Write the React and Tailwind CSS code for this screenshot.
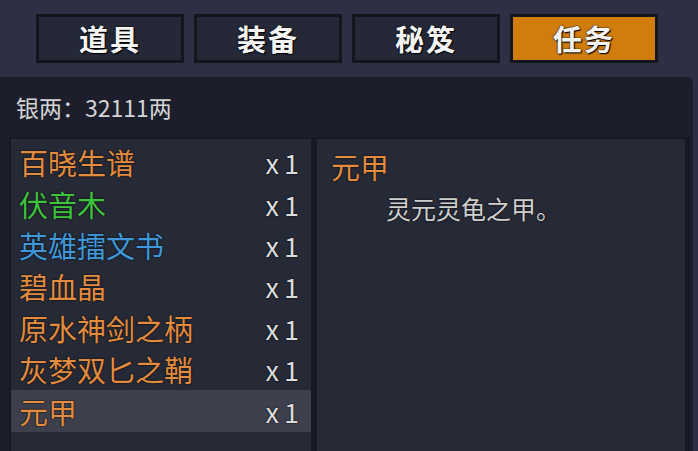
import React from "react";

const tabs = ["道具", "装备", "秘笈", "任务"];
const items = [
  { name: "百晓生谱", color: "text-[#e38b3e]" },
  { name: "伏音木", color: "text-[#3ec43c]" },
  { name: "英雄擂文书", color: "text-[#3f98dc]" },
  { name: "碧血晶", color: "text-[#e38b3e]" },
  { name: "原水神剑之柄", color: "text-[#e38b3e]" },
  { name: "灰梦双匕之鞘", color: "text-[#e38b3e]" },
  { name: "元甲", color: "text-[#e38b3e]", selected: true },
];

export default function App() {
  return (
    <div className="w-[698px] h-[451px] overflow-hidden bg-[#2d3044] flex flex-col font-['Noto_Sans_CJK_SC',sans-serif]">
      <div className="h-[77px] shrink-0 flex items-start pt-[14px] pl-[36px] gap-[10px]">
        {tabs.map((t, i) => (
          <div
            key={t}
            className={`w-[148px] h-[49px] border-[3px] border-[#14161d] flex items-center justify-center text-[29px] font-bold text-[#f4f4f4] tracking-[2px] [text-shadow:0_0_2px_#000,1px_1px_1px_#000] ${
              i === 3 ? "bg-[#d17d0e]" : "bg-[#252837]"
            }`}
          >
            {t}
          </div>
        ))}
      </div>
      <div className="flex-1 mr-[5px] bg-[#1c1f2b] rounded-tr-[6px] flex flex-col">
        <div className="h-[60px] shrink-0 flex items-center pl-[16px] pt-[1px] text-[23px] text-[#d4d4d4]">
          银两：32111两
        </div>
        <div className="flex-1 flex pl-[9px] pr-[3px]">
          <div className="w-[305px] h-full border-2 border-r-[3px] border-[#161922] border-b-0 bg-[#262a36] pt-[3px]">
            {items.map((it) => (
              <div
                key={it.name}
                className={`h-[41.4px] flex items-center justify-between pl-[8px] pr-[12px] ${
                  it.selected ? "bg-[#3d404c]" : ""
                }`}
              >
                <span className={`text-[29px] leading-none ${it.color} [text-shadow:0_0_2px_#111,0_0_1px_#000]`}>
                  {it.name}
                </span>
                <span className="flex items-center gap-[5px] text-[27px] leading-none text-[#dcdcdc] [text-shadow:0_0_2px_#000]">
                  <span>x</span>
                  <span>1</span>
                </span>
              </div>
            ))}
          </div>
          <div className="flex-1 h-full border-2 border-l-[3px] border-r-[5px] border-b-0 border-[#161922] bg-[#262936] pl-[14px] pt-[8px]">
            <div className="text-[29px] leading-[38px] text-[#e38b3e] [text-shadow:0_0_2px_#111,0_0_1px_#000]">元甲</div>
            <div className="mt-[7px] pl-[55px] text-[25px] leading-[32px] text-[#cfcfcf] [text-shadow:0_0_2px_#000]">
              灵元灵龟之甲。
            </div>
          </div>
        </div>
      </div>
    </div>
  );
}
